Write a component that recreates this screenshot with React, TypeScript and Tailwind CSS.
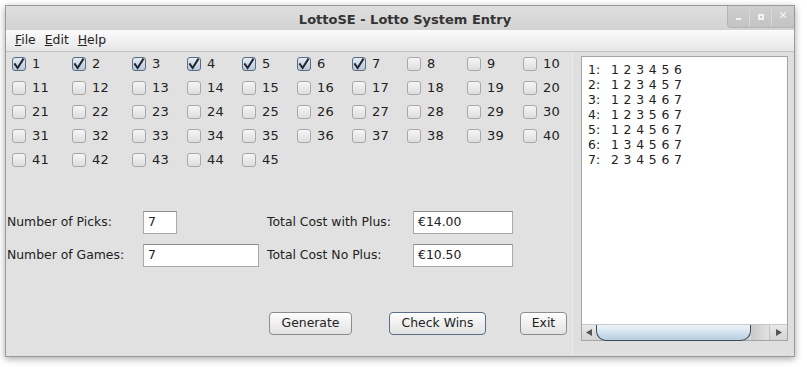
import React from "react";

const font = { fontFamily: '"DejaVu Sans", "Liberation Sans", sans-serif' };

const colWidths = [60, 60, 55, 55, 55, 55, 55, 60, 56, 50];
const picked = [1, 2, 3, 4, 5, 6, 7];

const lines = [
	["1:", "1 2 3 4 5 6"],
	["2:", "1 2 3 4 5 7"],
	["3:", "1 2 3 4 6 7"],
	["4:", "1 2 3 5 6 7"],
	["5:", "1 2 4 5 6 7"],
	["6:", "1 3 4 5 6 7"],
	["7:", "2 3 4 5 6 7"],
];

function Box({ checked }: { checked: boolean }) {
	return (
		<div
			className={
				checked
					? "w-[14px] h-[14px] rounded-[3px] border border-[#5c6b7e] bg-gradient-to-b from-[#e4ecf4] to-[#b9c9da] flex items-center justify-center"
					: "w-[14px] h-[14px] rounded-[3px] border border-[#a8a8a8] bg-gradient-to-b from-[#f6f6f6] to-[#dedede]"
			}
		>
			{checked && (
				<svg width="12" height="12" viewBox="0 0 12 12">
					<path d="M2 6.2 L4.6 10 L10 1.5" fill="none" stroke="#1e2530" strokeWidth="2" strokeLinecap="square" />
				</svg>
			)}
		</div>
	);
}

function Field({ value, w }: { value: string; w: string }) {
	return (
		<div
			className={`${w} h-[23px] bg-white border border-[#a9a9a9] border-t-[#8e8e8e] flex items-center pl-[4px] text-[12.4px] text-[#222]`}
		>
			{value}
		</div>
	);
}

function Btn({ label, w, focused }: { label: string; w: string; focused?: boolean }) {
	return (
		<div
			className={`${w} h-[23px] rounded-[4px] border ${
				focused ? "border-[#5a6f86]" : "border-[#8c8c8c]"
			} bg-gradient-to-b from-[#fdfdfd] to-[#e2e2e2] flex items-center justify-center text-[12.4px] text-[#222] shadow-[inset_0_1px_0_#fff]`}
		>
			{label}
		</div>
	);
}

export default function App() {
	const nums = Array.from({ length: 45 }, (_, i) => i + 1);
	return (
		<div className="w-[807px] h-[367px] bg-white overflow-hidden" style={font}>
			<div className="ml-[5px] mt-[5px] w-[790px] h-[352px] border border-[#9a9a9a] bg-[#e1e1e1] flex flex-col shadow-[0_2px_7px_rgba(0,0,0,0.35)]">
				{/* title bar */}
				<div className="h-[24px] bg-gradient-to-b from-[#dedede] to-[#d3d3d3] flex items-start relative">
					<div className="flex-1 text-center font-bold text-[13px] text-[#333] pt-[4px] pl-[10px]">
						LottoSE - Lotto System Entry
					</div>
					<div className="absolute right-0 top-0 flex h-[22px] rounded-bl-[4px] border-l border-b border-[#b5b5b5] bg-gradient-to-b from-[#cfcfcf] to-[#c3c3c3] overflow-hidden">
						<div className="w-[22px] flex items-center justify-center border-r border-[#d8d8d8]">
							<div className="w-[5px] h-[2px] bg-[#f2f2f2] mt-[5px]" />
						</div>
						<div className="w-[22px] flex items-center justify-center border-r border-[#d8d8d8]">
							<div className="w-[6px] h-[6px] border-2 border-[#f2f2f2]" />
						</div>
						<div className="w-[22px] flex items-center justify-center text-[#f2f2f2] text-[11px] font-bold">
							✕
						</div>
					</div>
				</div>
				{/* menu bar */}
				<div className="h-[22px] bg-gradient-to-b from-[#fbfbfb] to-[#e6e6e6] border-b border-[#c4c4c4] flex items-center gap-[9px] pl-[9px] text-[12.4px] text-[#222]">
					<span><span className="underline">F</span>ile</span>
					<span><span className="underline">E</span>dit</span>
					<span><span className="underline">H</span>elp</span>
				</div>
				{/* body */}
				<div className="flex-1 flex">
					<div className="w-[567px] flex flex-col pl-[6px] border-r border-[#ececec]">
						<div
							className="grid text-[13px] text-[#222]"
							style={{ gridTemplateColumns: colWidths.map((w) => `${w}px`).join(" ") }}
						>
							{nums.map((n) => (
								<div key={n} className="h-[24px] flex items-center gap-[6px]">
									<Box checked={picked.includes(n)} />
									<span className="tracking-[0.3px]">{n}</span>
								</div>
							))}
						</div>
						<div className="mt-[39px] flex flex-col gap-[10px] text-[12.4px] text-[#222]">
							<div className="flex items-center -ml-[5px]">
								<span className="w-[136px]">Number of Picks:</span>
								<Field value="7" w="w-[34px]" />
								<span className="ml-[90px] w-[146px]">Total Cost with Plus:</span>
								<Field value="€14.00" w="w-[100px]" />
							</div>
							<div className="flex items-center -ml-[5px]">
								<span className="w-[136px]">Number of Games:</span>
								<Field value="7" w="w-[116px]" />
								<span className="ml-[8px] w-[146px]">Total Cost No Plus:</span>
								<Field value="€10.50" w="w-[100px]" />
							</div>
						</div>
						<div className="mt-[45px] flex items-center pl-[257px]">
							<Btn label="Generate" w="w-[83px]" />
							<div className="ml-[37px]">
								<Btn label="Check Wins" w="w-[97px]" focused />
							</div>
							<div className="ml-[34px]">
								<Btn label="Exit" w="w-[47px]" />
							</div>
						</div>
					</div>
					<div className="flex-1 pl-[8px] pr-[6px] pt-[4px] pb-[15px] bg-[#dfdfdf]">
						<div className="h-full bg-white border border-[#a4a4a4] flex flex-col">
							<div className="flex-1 pl-[6px] pt-[5px] text-[12.4px] leading-[15px] text-[#222]">
								{lines.map(([a, b]) => (
									<div key={a} className="flex">
										<span className="w-[23px]">{a}</span>
										<span className="tracking-[0.4px]">{b}</span>
									</div>
								))}
							</div>
							<div className="h-[16px] flex items-center bg-gradient-to-b from-[#e9e9e9] to-[#d4d4d4] border-t border-[#c8c8c8]">
								<div className="w-[14px] flex items-center justify-center">
									<svg width="7" height="7" viewBox="0 0 7 7"><path d="M0 3.5 L6 0 L6 7Z" fill="#555" /></svg>
								</div>
								<div className="w-[155px] h-[16px] rounded-b-[10px] border border-t-0 border-[#3f4b58] bg-gradient-to-b from-[#eef4fa] via-[#d3e2ef] to-[#b8cde0]" />
								<div className="w-[18px] h-full bg-gradient-to-r from-[#c9c9c9] to-[#e2e2e2]" />
								<div className="flex-1" />
								<div className="w-[18px] flex items-center justify-center border-l border-[#c4c4c4] h-full">
									<svg width="7" height="7" viewBox="0 0 7 7"><path d="M7 3.5 L1 0 L1 7Z" fill="#555" /></svg>
								</div>
							</div>
						</div>
					</div>
				</div>
			</div>
		</div>
	);
}
